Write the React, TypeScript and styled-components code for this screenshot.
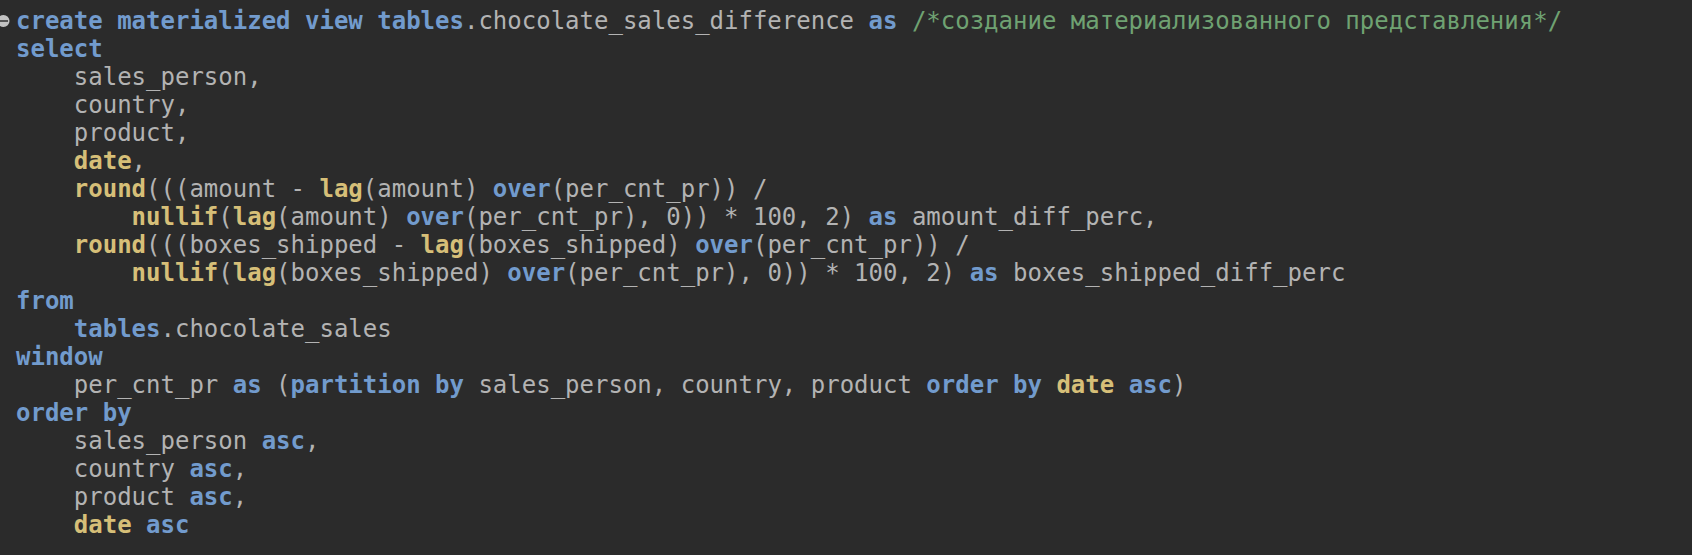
import React from "react";
import styled, { createGlobalStyle } from "styled-components";

const GlobalStyle = createGlobalStyle`
  html, body {
    margin: 0;
    padding: 0;
    background: #2b2b2b;
  }
  body {
    width: 1692px;
    height: 555px;
    overflow: hidden;
  }
`;

type Kind = "plain" | "kw" | "fn" | "comment";
type Token = [Kind, string];

const Editor = styled.div`
  display: flex;
  flex-direction: column;
  padding-top: 7px;
  background: #2b2b2b;
  height: 555px;
  box-sizing: border-box;
  font-family: "DejaVu Sans Mono", "Liberation Mono", monospace;
  font-size: 24px;
  line-height: 28px;
  color: #b3b3b3;
`;

const Line = styled.div`
  display: flex;
  align-items: center;
  height: 28px;
`;

const Gutter = styled.div`
  width: 16px;
  flex: 0 0 16px;
  height: 28px;
  display: flex;
  align-items: center;
`;

const Code = styled.pre`
  margin: 0;
  font: inherit;
  white-space: pre;
`;

const Tok = styled.span<{ $kind: Kind }>`
  font-weight: ${(p) => (p.$kind === "kw" || p.$kind === "fn" ? 700 : 400)};
  color: ${(p) =>
    p.$kind === "kw"
      ? "#729bcd"
      : p.$kind === "fn"
      ? "#d6bf78"
      : p.$kind === "comment"
      ? "#6fa272"
      : "#b3b3b3"};
`;

const FoldIcon = () => (
  <svg width="16" height="28" viewBox="0 0 16 28">
    <circle cx="3.5" cy="14" r="6" fill="#c2c2c2" />
    <rect x="-1" y="13.2" width="9" height="1.6" fill="#3a3a3a" />
  </svg>
);

const k = (t: string): Token => ["kw", t];
const f = (t: string): Token => ["fn", t];
const p = (t: string): Token => ["plain", t];
const c = (t: string): Token => ["comment", t];

const lines: Token[][] = [
  [
    k("create materialized view tables"),
    p(".chocolate_sales_difference "),
    k("as"),
    p(" "),
    c("/*создание материализованного представления*/"),
  ],
  [k("select")],
  [p("    sales_person,")],
  [p("    country,")],
  [p("    product,")],
  [p("    "), f("date"), p(",")],
  [
    p("    "),
    f("round"),
    p("(((amount - "),
    f("lag"),
    p("(amount) "),
    k("over"),
    p("(per_cnt_pr)) /"),
  ],
  [
    p("        "),
    f("nullif"),
    p("("),
    f("lag"),
    p("(amount) "),
    k("over"),
    p("(per_cnt_pr), 0)) * 100, 2) "),
    k("as"),
    p(" amount_diff_perc,"),
  ],
  [
    p("    "),
    f("round"),
    p("(((boxes_shipped - "),
    f("lag"),
    p("(boxes_shipped) "),
    k("over"),
    p("(per_cnt_pr)) /"),
  ],
  [
    p("        "),
    f("nullif"),
    p("("),
    f("lag"),
    p("(boxes_shipped) "),
    k("over"),
    p("(per_cnt_pr), 0)) * 100, 2) "),
    k("as"),
    p(" boxes_shipped_diff_perc"),
  ],
  [k("from")],
  [p("    "), k("tables"), p(".chocolate_sales")],
  [k("window")],
  [
    p("    per_cnt_pr "),
    k("as"),
    p(" ("),
    k("partition by"),
    p(" sales_person, country, product "),
    k("order by"),
    p(" "),
    f("date"),
    p(" "),
    k("asc"),
    p(")"),
  ],
  [k("order by")],
  [p("    sales_person "), k("asc"), p(",")],
  [p("    country "), k("asc"), p(",")],
  [p("    product "), k("asc"), p(",")],
  [p("    "), f("date"), p(" "), k("asc")],
];

export default function App() {
  return (
    <>
      <GlobalStyle />
      <Editor>
        {lines.map((toks, i) => (
          <Line key={i}>
            <Gutter>{i === 0 ? <FoldIcon /> : null}</Gutter>
            <Code>
              {toks.map(([kind, text], j) => (
                <Tok key={j} $kind={kind}>
                  {text}
                </Tok>
              ))}
            </Code>
          </Line>
        ))}
      </Editor>
    </>
  );
}
